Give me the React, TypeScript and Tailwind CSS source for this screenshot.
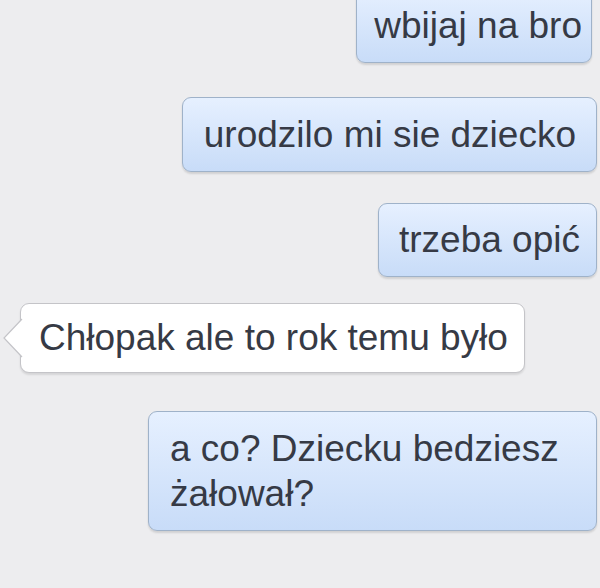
import React from 'react'

const font = { fontFamily: '"Liberation Sans", Arial, sans-serif' }

function Sent({ children, className = '' }: { children: React.ReactNode; className?: string }) {
    return (
        <div
            className={`rounded-[9px] border border-[#9fb2c9] bg-gradient-to-b from-[#e6f0ff] to-[#c8dcf8] text-[#363a45] text-[37px] leading-[45px] shadow-[0_2px_2px_rgba(0,0,0,0.12)] ${className}`}
        >
            {children}
        </div>
    )
}

export default function App() {
    return (
        <div className="w-[600px] h-[588px] overflow-hidden bg-[#ededef]" style={font}>
            <div className="flex flex-col items-end pr-[3px]">
                {/* outgoing */}
                <Sent className="mt-[-12px] mr-[5px] pt-[14px] pb-[14px] pl-[17px] pr-[9px]">wbijaj na bro</Sent>
                <Sent className="mt-[34px] pt-[14px] pb-[14px] pl-[21px] pr-[20px]">urodzilo mi sie dziecko</Sent>
                <Sent className="mt-[31px] pt-[13px] pb-[14px] pl-[20px] pr-[16px]">trzeba opić</Sent>

                {/* incoming */}
                <div className="self-start mt-[26px] ml-[20px] relative">
                    <svg className="absolute left-[-17px] top-[15px]" width="20" height="40" viewBox="0 0 20 40">
                        <path d="M19 1 L1 20 L19 39" fill="#ffffff" stroke="#c4c4c8" strokeWidth="1.2" />
                    </svg>
                    <div className="rounded-[9px] border border-[#c4c4c8] bg-white text-[#363a45] text-[37px] leading-[45px] pt-[11px] pb-[12px] pl-[18px] pr-[16px] shadow-[0_2px_2px_rgba(0,0,0,0.1)]">
                        Chłopak ale to rok temu było
                    </div>
                </div>

                <Sent className="mt-[38px] w-[449px] pt-[14px] pb-[14px] pl-[21px] pr-[16px]">
                    a co? Dziecku bedziesz żałował?
                </Sent>
            </div>
        </div>
    )
}
